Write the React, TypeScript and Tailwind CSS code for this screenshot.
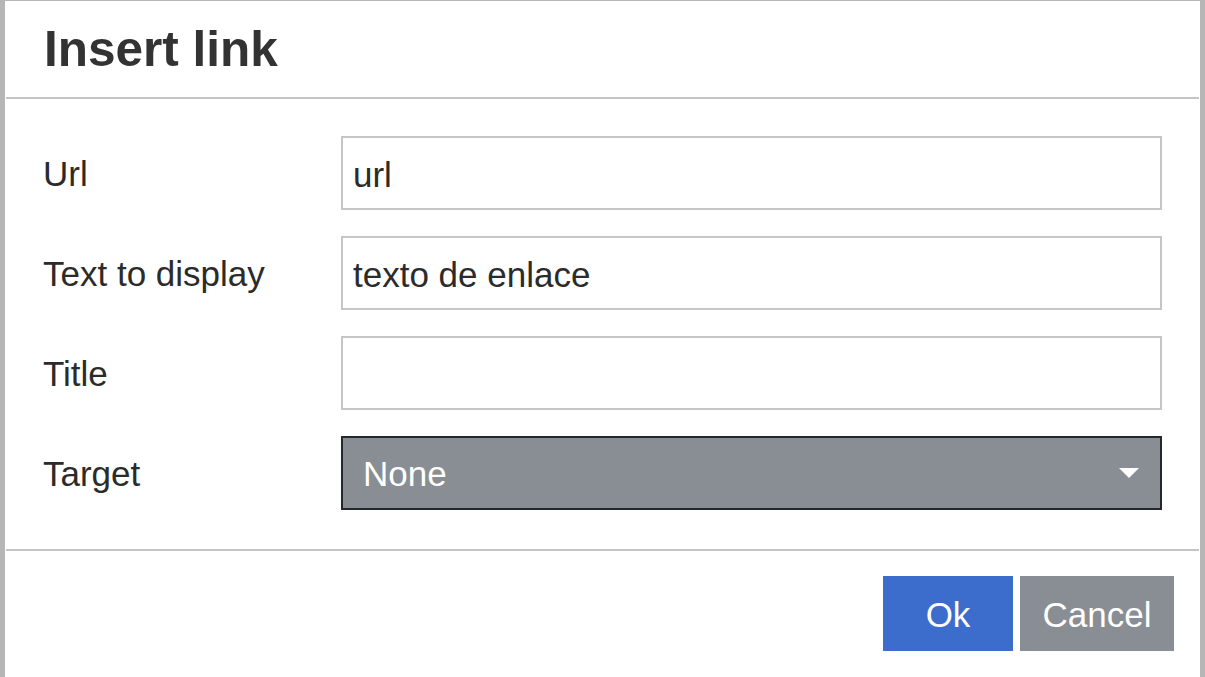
import React from "react";

const Row = ({ label, children }: { label: string; children: React.ReactNode }) => (
  <div className="flex items-center">
    <div className="w-[298px] shrink-0 pt-[3px] text-[35px] leading-[1.15] text-[#2b2b2b]">{label}</div>
    <div className="flex-1">{children}</div>
  </div>
);

const TextInput = ({ value }: { value: string }) => (
  <input
    readOnly
    defaultValue={value}
    className="block w-full h-[74px] border-2 border-[#c5c5c5] bg-white pl-[10px] pt-[3px] text-[35px] text-[#2b2b2b] outline-none"
  />
);

export default function App() {
  return (
    <div className="w-[1205px] h-[677px] overflow-hidden bg-[#b6b6b6] pl-[5px] pr-[5px] pt-[1px] font-['Liberation_Sans',Arial,sans-serif]">
      <div className="bg-white h-full flex flex-col">
        <div className="h-[96px] pl-[39px] pt-[20px]">
          <h1 className="text-[49.5px] font-bold leading-[1.15] text-[#333333]">Insert link</h1>
        </div>
        <div className="h-[2px] bg-[#c5c5c5] mx-[1px]" />
        <div className="pt-[37px] pb-[39px] pl-[38px] pr-[38px] flex flex-col gap-[26px]">
          <Row label="Url">
            <TextInput value="url" />
          </Row>
          <Row label="Text to display">
            <TextInput value="texto de enlace" />
          </Row>
          <Row label="Title">
            <TextInput value="" />
          </Row>
          <Row label="Target">
            <div className="flex items-center justify-between h-[74px] border-2 border-[#23272e] bg-[#898d94] pl-[20px] pr-[21px]">
              <span className="pt-[3px] text-[35px] leading-[1.15] text-white">None</span>
              <svg width="20" height="10" viewBox="0 0 20 10" className="block">
                <path d="M0 0 H20 L10 10 Z" fill="#ffffff" />
              </svg>
            </div>
          </Row>
        </div>
        <div className="h-[2px] bg-[#c5c5c5] mx-[1px]" />
        <div className="flex justify-end gap-[7px] pt-[25px] pr-[26px]">
          <button className="w-[130px] h-[75px] pt-[3px] bg-[#3d6dcc] text-white text-[35px] leading-[1.15]">Ok</button>
          <button className="w-[154px] h-[75px] pt-[3px] bg-[#898d94] text-white text-[35px] leading-[1.15]">Cancel</button>
        </div>
      </div>
    </div>
  );
}
